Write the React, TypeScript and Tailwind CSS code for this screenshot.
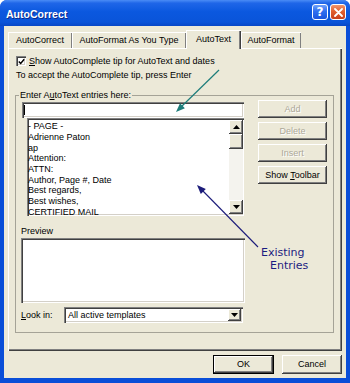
import React from "react";

const raised =
  "shadow-[inset_-1px_-1px_0_#404040,inset_1px_1px_0_#ffffff,inset_-2px_-2px_0_#808080]";
const sunken =
  "shadow-[inset_1px_1px_0_#808080,inset_2px_2px_0_#404040,inset_-1px_-1px_0_#ffffff,inset_-2px_-2px_0_#d4d0c8]";

function Arrow({ down }: { down?: boolean }) {
  return (
    <svg width="7" height="4" viewBox="0 0 7 4">
      {down ? <polygon points="0,0 7,0 3.5,4" fill="#000" /> : <polygon points="0,4 7,4 3.5,0" fill="#000" />}
    </svg>
  );
}

function SideButton({ children, disabled }: { children: React.ReactNode; disabled?: boolean }) {
  return (
    <div
      className={`h-[18px] w-[69px] flex items-center justify-center bg-[#ece9d8] ${raised} ${
        disabled ? "text-[#aca899] [text-shadow:1px_1px_0_#ffffff]" : "text-black"
      }`}
    >
      {children}
    </div>
  );
}

export default function App() {
  const items = [
    "- PAGE -",
    "Adrienne Paton",
    "ap",
    "Attention:",
    "ATTN:",
    "Author, Page #, Date",
    "Best regards,",
    "Best wishes,",
    "CERTIFIED MAIL",
  ];
  return (
    <div className="relative w-[350px] h-[383px] bg-[#0a4ed8] rounded-t-[7px] overflow-hidden font-['Liberation_Sans',Arial,sans-serif] text-[9px] leading-[11px] text-black">
      {/* Title bar */}
      <div className="h-[26px] flex items-center justify-between pl-[6px] pr-[4px] bg-[linear-gradient(180deg,#4a8cf6_0%,#1f66e8_12%,#0b58df_45%,#0a54d9_85%,#0847c6_100%)]">
        <span className="mt-[2px] text-white font-bold text-[10.5px] leading-[13px] [text-shadow:1px_1px_0_#0b2a8a]">
          AutoCorrect
        </span>
        <div className="flex gap-[2px] -mt-[2px]">
          <div className="w-[16px] h-[16px] rounded-[3px] border border-white bg-[linear-gradient(180deg,#6fa0fa_0%,#2f6ff0_45%,#1a55de_100%)] flex items-center justify-center text-white font-bold text-[12px] leading-[12px] font-['DejaVu_Sans',sans-serif]">
            ?
          </div>
          <div className="w-[16px] h-[16px] rounded-[3px] border border-white bg-[linear-gradient(180deg,#f0956e_0%,#e2602f_45%,#c8401c_100%)] flex items-center justify-center">
            <svg width="9" height="9" viewBox="0 0 9 9">
              <path d="M1 1 L8 8 M8 1 L1 8" stroke="#fff" strokeWidth="1.8" strokeLinecap="round" />
            </svg>
          </div>
        </div>
      </div>

      {/* Client */}
      <div className="mx-[4px] h-[352px] bg-[#ece9d8] px-[4px] flex flex-col">
        {/* Tabs */}
        <div className="relative z-10 mt-[4px] h-[19px] flex items-end">
          <div className="w-[64px] h-[16px] mb-[1px] pt-[3px] text-center shadow-[inset_1px_1px_0_#ffffff,inset_-1px_0_0_#808080]">
            AutoCorrect
          </div>
          <div className="w-[114px] h-[16px] mb-[1px] pt-[3px] text-center shadow-[inset_1px_1px_0_#ffffff,inset_-1px_0_0_#808080]">
            AutoFormat As You Type
          </div>
          <div className="w-[55px] h-[19px] pt-[4px] text-center bg-[#ece9d8] shadow-[inset_1px_1px_0_#ffffff,inset_-1px_0_0_#404040,inset_-2px_0_0_#808080]">
            AutoText
          </div>
          <div className="w-[60px] h-[16px] mb-[1px] pt-[3px] text-center shadow-[inset_1px_1px_0_#ffffff,inset_-1px_0_0_#808080]">
            AutoFormat
          </div>
        </div>

        {/* Panel */}
        <div className="-mt-[1px] w-[334px] h-[303px] pt-[8px] pl-[8px] flex flex-col shadow-[inset_1px_1px_0_#ffffff,inset_-1px_-1px_0_#404040,inset_-2px_-2px_0_#808080]">
          <div className="h-[10px] flex items-center">
            <div className={`w-[10px] h-[10px] bg-white ${sunken} flex items-center justify-center`}>
              <svg width="7" height="7" viewBox="0 0 7 7">
                <path d="M0.8 3.4 L2.7 5.4 L6.2 1.2" stroke="#000" strokeWidth="1.5" fill="none" />
              </svg>
            </div>
            <span className="ml-[3px]">
              <span className="underline">S</span>how AutoComplete tip for AutoText and dates
            </span>
          </div>
          <div className="mt-[4px]">To accept the AutoComplete tip, press Enter</div>

          <fieldset className="mt-[9px] -ml-[1px] w-[319px] border border-[#a5a397] pl-[5px] pt-[1px] pb-[9px]">
            <legend className="px-[1px] -ml-[2px] leading-[11px]">
              Enter A<span className="underline">u</span>toText entries here:
            </legend>
            <div className="flex items-start">
              {/* left column */}
              <div className="w-[224px] flex flex-col">
                <div className={`ml-[1px] w-[222px] h-[16px] bg-white ${sunken} flex items-center pl-[2px]`}>
                  <div className="w-px h-[10px] bg-black" />
                </div>
                <div className={`ml-[6px] w-[217px] h-[98px] bg-white ${sunken} flex`}>
                  <div className="flex-1 pt-[3.4px] pl-[1px] leading-[10.65px] overflow-hidden">
                    {items.map((t) => (
                      <div key={t} className="whitespace-nowrap">
                        {t}
                      </div>
                    ))}
                  </div>
                  <div className="w-[14px] my-[2px] mr-[1px] flex flex-col">
                    <div className={`h-[14px] bg-[#ece9d8] ${raised} flex items-center justify-center`}>
                      <Arrow />
                    </div>
                    <div className={`h-[15px] bg-[#ece9d8] ${raised}`} />
                    <div className="flex-1 bg-[#f4f3ee]" />
                    <div className={`h-[14px] bg-[#ece9d8] ${raised} flex items-center justify-center`}>
                      <Arrow down />
                    </div>
                  </div>
                </div>
                <div className="mt-[10px]">Preview</div>
                <div className={`mt-[1px] w-[224px] h-[65px] bg-white ${sunken}`} />
                <div className="mt-[4px] h-[16px] flex items-center">
                  <div className="w-[43px]">
                    <span className="underline">L</span>ook in:
                  </div>
                  <div className={`w-[179px] h-[16px] bg-white ${sunken} flex items-center pl-[4px]`}>
                    <span className="flex-1">All active templates</span>
                    <div className={`w-[13px] h-[12px] mr-[2px] bg-[#ece9d8] ${raised} flex items-center justify-center`}>
                      <Arrow down />
                    </div>
                  </div>
                </div>
              </div>
              {/* right column */}
              <div className="-mt-[2px] ml-[13px] w-[69px] flex flex-col gap-[4px]">
                <SideButton disabled>Add</SideButton>
                <SideButton disabled>Delete</SideButton>
                <SideButton disabled>Insert</SideButton>
                <SideButton>
                  <span>
                    Show <span className="underline">T</span>oolbar
                  </span>
                </SideButton>
                <div className="mt-[58px] font-['DejaVu_Sans',sans-serif] text-[11px] leading-[13px] text-[#1c1c80]">
                  <div className="ml-[3px]">Existing</div>
                  <div className="ml-[12px]">Entries</div>
                </div>
              </div>
            </div>
          </fieldset>
        </div>

        {/* Bottom buttons */}
        <div className="mt-[4px] flex justify-end gap-[8px]">
          <div className={`w-[61px] h-[19px] border border-black flex items-center justify-center bg-[#ece9d8] ${raised}`}>
            OK
          </div>
          <div className={`w-[60px] h-[19px] flex items-center justify-center bg-[#ece9d8] ${raised}`}>
            Cancel
          </div>
        </div>
      </div>

      {/* Annotation arrows */}
      <svg className="absolute inset-0 pointer-events-none" width="350" height="383" viewBox="0 0 350 383">
        <line x1="219" y1="70" x2="180" y2="108" stroke="#1d7d7a" strokeWidth="1.2" />
        <polygon points="176,112 184.9,108.2 180,103.2" fill="#1d7d7a" />
        <line x1="258" y1="247" x2="200" y2="188" stroke="#1c1c7a" strokeWidth="1.1" />
        <polygon points="197,185 205.8,189 200.8,193.9" fill="#1c1c7a" />
      </svg>
    </div>
  );
}
